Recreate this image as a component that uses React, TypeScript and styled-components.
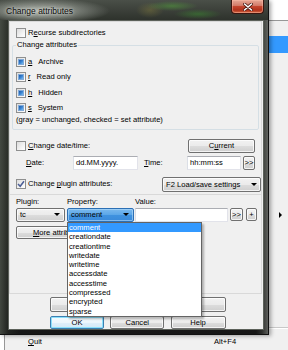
import React from "react";
import styled, { createGlobalStyle } from "styled-components";

const Global = createGlobalStyle`
  html, body { margin: 0; padding: 0; background: #ffffff; overflow: hidden; }
  body { font-family: "Liberation Sans", Arial, sans-serif; font-size: 7.6px; color: #000; }
  *, *::before, *::after { box-sizing: border-box; }
`;

const Screen = styled.div`
  position: relative;
  width: 288px;
  height: 350px;
  overflow: hidden;
  background: #ffffff;
`;

/* ---------- menu lying behind the dialog ---------- */
const Menu = styled.div`
  position: absolute;
  left: 4px;
  top: 20px;
  width: 300px;
  height: 340px;
  background: #f0f0f0;
  border: 1px solid #979797;
  display: flex;
  flex-direction: column;
  padding: 0 2px;
`;

const MenuRow = styled.div<{ $h: number; $selected?: boolean }>`
  flex: none;
  height: ${(p) => p.$h}px;
  display: grid;
  grid-template-columns: 186px 65px 10px;
  align-items: center;
  padding-left: 21px;
  background: ${(p) => (p.$selected ? "#3399ff" : "transparent")};
  color: ${(p) => (p.$selected ? "#fff" : "#000")};
`;

const MenuSpacer = styled.div<{ $h: number }>`
  flex: none;
  height: ${(p) => p.$h}px;
`;

const MenuSeparator = styled.div`
  flex: none;
  height: 2px;
  margin: 3px 0 4px 24px;
  border-top: 1px solid #c8c8c8;
  border-bottom: 1px solid #ffffff;
`;

const MenuText = styled.span``;

const SubArrow = styled.span`
  width: 0;
  height: 0;
  border-left: 3px solid #000;
  border-top: 3px solid transparent;
  border-bottom: 3px solid transparent;
`;

/* ---------- dialog window ---------- */
const Window = styled.div`
  position: absolute;
  left: 0;
  top: 0;
  width: 269px;
  height: 335px;
  display: flex;
  flex-direction: column;
  background:
    linear-gradient(to right, rgba(70, 76, 68, 0.9) 0px, rgba(40, 44, 38, 0.6) 8px, transparent 20px),
    linear-gradient(to left, rgba(110, 112, 108, 0.8) 0px, rgba(60, 62, 58, 0.6) 6px, transparent 12px),
    linear-gradient(to bottom, #3e433c 0px, #30352e 30px, #2a2d28 60%, #161616 100%);
  border-right: 1px solid #101010;
  border-bottom: 1px solid #101010;
  box-shadow: 2px 1px 4px rgba(0, 0, 0, 0.35);
`;

const TitleBar = styled.div`
  height: 20px;
  flex: none;
  display: flex;
  align-items: flex-start;
  padding-left: 6px;
  background:
    radial-gradient(ellipse 70px 13px at 40px 11px, rgba(190, 196, 188, 0.95), rgba(160, 166, 158, 0.5) 60%, rgba(150, 155, 148, 0) 100%),
    radial-gradient(ellipse 26px 5px at 172px 6px, rgba(80, 150, 60, 0.6), transparent),
    radial-gradient(ellipse 24px 5px at 198px 14px, rgba(60, 135, 50, 0.55), transparent),
    radial-gradient(ellipse 14px 8px at 150px 10px, rgba(120, 115, 60, 0.5), transparent),
    linear-gradient(to bottom, #4a4f48, #2e322c);
`;

const TitleText = styled.span`
  font-size: 8.5px;
  line-height: 20px;
  padding-top: 1px;
  color: #0c0c0c;
  text-shadow: 0 0 3px rgba(230, 232, 228, 0.95), 0 0 7px rgba(220, 222, 218, 0.7);
`;

const CloseButton = styled.div`
  margin-left: auto;
  margin-right: 4px;
  width: 33px;
  height: 14px;
  flex: none;
  border: 1px solid #3a1610;
  border-top: none;
  border-radius: 0 0 4px 4px;
  background: linear-gradient(to bottom, #e6a896 0%, #d47c6a 42%, #c4452e 50%, #b0321c 78%, #d46a44 100%);
  box-shadow: inset 0 0 0 1px rgba(255, 190, 170, 0.45);
  display: flex;
  align-items: center;
  justify-content: center;
`;

const FrameBody = styled.div`
  flex: 1;
  display: flex;
  padding: 0 4px 4px 8px;
`;

const Client = styled.div`
  flex: 1;
  position: relative;
  background: #f0f0f0;
  border: 1px solid #5c615a;
  display: flex;
  flex-direction: column;
`;

const Panel = styled.div`
  height: 273px;
  flex: none;
  margin-right: 1px;
  border: 1px solid #d9d9d9;
  display: flex;
  flex-direction: column;
`;

const CheckRow = styled.div<{ $mt: number; $h: number; $pr?: number }>`
  flex: none;
  display: flex;
  align-items: center;
  margin-top: ${(p) => p.$mt}px;
  height: ${(p) => p.$h}px;
  padding-left: 6px;
  padding-right: ${(p) => p.$pr ?? 0}px;
  white-space: nowrap;
`;

const Label = styled.span`
  margin-left: 2px;
  line-height: 10px;
`;

const Box = styled.span`
  width: 10px;
  height: 10px;
  flex: none;
  border: 1px solid #8e8f8f;
  background: linear-gradient(135deg, #dcdcdc 0%, #f6f6f6 70%, #ffffff 100%);
  display: inline-flex;
  align-items: center;
  justify-content: center;
`;

const Indeterminate = styled.span`
  width: 6px;
  height: 6px;
  border: 1px solid #7fa9d8;
  background: linear-gradient(135deg, #1d58a6 0%, #3c86d4 55%, #7cc0f2 100%);
`;

const Group = styled.fieldset`
  margin: 2px 2px 0 2px;
  padding: 7px 3px 4px 3px;
  border: 1px solid #d5dfe5;
  border-radius: 2px;
  min-width: 0;
  display: flex;
  flex-direction: column;
`;

const GroupCaption = styled.legend`
  padding: 0 1px;
  line-height: 10px;
  font-size: 7.6px;
`;

const AttrList = styled.div`
  display: flex;
  flex-direction: column;
  gap: 5.33px;
`;

const AttrRow = styled.div`
  height: 10px;
  display: flex;
  align-items: center;
  white-space: nowrap;
`;

const AccelKey = styled.u`
  margin-left: 2px;
  line-height: 10px;
`;

const AttrName = styled.span`
  margin-left: 6px;
  line-height: 10px;
`;

const Note = styled.div`
  margin-top: 2px;
  line-height: 10px;
  white-space: nowrap;
`;

const Btn = styled.button<{ $w: number; $h: number; $default?: boolean; $align?: string }>`
  font: inherit;
  color: #000;
  width: ${(p) => p.$w}px;
  height: ${(p) => p.$h}px;
  flex: none;
  padding: 0 3px;
  margin: 0;
  display: flex;
  align-items: center;
  justify-content: ${(p) => p.$align ?? "center"};
  border: 1px solid ${(p) => (p.$default ? "#3c7fb1" : "#707070")};
  border-radius: 2px;
  background: ${(p) =>
    p.$default
      ? "linear-gradient(to bottom, #f4fbff 0%, #ecf6fc 50%, #dfeffa 51%, #d3e9f7 100%)"
      : "linear-gradient(to bottom, #f2f2f2 0%, #ebebeb 50%, #dddddd 51%, #cfcfcf 100%)"};
  box-shadow: inset 0 0 0 1px ${(p) => (p.$default ? "#8ce0fb" : "rgba(255,255,255,0.75)")};
  white-space: nowrap;
  overflow: hidden;
`;

const DateRow = styled.div`
  flex: none;
  margin-top: 3px;
  height: 14px;
  padding-left: 16px;
  display: flex;
  align-items: center;
  white-space: nowrap;
`;

const FieldLabel = styled.span<{ $w: number; $ml?: number }>`
  width: ${(p) => p.$w}px;
  margin-left: ${(p) => p.$ml ?? 0}px;
  flex: none;
`;

const TextBox = styled.div<{ $w: number; $h?: number; $ml?: number }>`
  width: ${(p) => p.$w}px;
  height: ${(p) => p.$h ?? 14}px;
  margin-left: ${(p) => p.$ml ?? 0}px;
  flex: none;
  background: #fff;
  border: 1px solid #e2e3ea;
  border-top-color: #abadb3;
  border-left-color: #dbdfe6;
  display: flex;
  align-items: center;
  padding-left: 2px;
  white-space: nowrap;
`;

const PluginSection = styled.div`
  flex: 1;
  margin-top: 2px;
  border-top: 1px solid #d9d9d9;
  padding: 2px 0 0 6px;
  display: flex;
  flex-direction: column;
`;

const ColumnLabels = styled.div`
  display: flex;
  line-height: 10px;
  height: 10px;
`;

const ComboRow = styled.div`
  margin-top: 1px;
  height: 14px;
  display: flex;
  align-items: center;
`;

const Combo = styled.div<{ $w: number; $ml?: number; $open?: boolean }>`
  width: ${(p) => p.$w}px;
  height: 14px;
  margin-left: ${(p) => p.$ml ?? 0}px;
  flex: none;
  display: flex;
  align-items: center;
  justify-content: space-between;
  padding: 0 4px 0 3px;
  border: 1px solid ${(p) => (p.$open ? "#2c6fb4" : "#707070")};
  border-radius: 2px;
  background: ${(p) =>
    p.$open
      ? "linear-gradient(to bottom, #7ab9ee 0%, #5aa6e8 50%, #3f92df 51%, #3a8adb 100%)"
      : "linear-gradient(to bottom, #f2f2f2 0%, #ebebeb 50%, #dddddd 51%, #cfcfcf 100%)"};
  box-shadow: inset 0 0 0 1px ${(p) => (p.$open ? "rgba(180,220,250,0.6)" : "rgba(255,255,255,0.75)")};
`;

const DropArrow = styled.span`
  width: 0;
  height: 0;
  flex: none;
  border-top: 3px solid #000;
  border-left: 3px solid transparent;
  border-right: 3px solid transparent;
`;

const SmallBtnRow = styled.div`
  display: flex;
  margin-left: 2px;
  gap: 3px;
`;

const WideRow = styled.div<{ $mt: number }>`
  flex: none;
  margin-top: ${(p) => p.$mt}px;
  margin-left: 41px;
  display: flex;
  gap: 6.25px;
`;

const DropList = styled.div`
  position: absolute;
  left: 58px;
  top: 201px;
  width: 135px;
  height: 95px;
  background: #fff;
  border: 1px solid #646464;
  box-shadow: 2px 2px 2px rgba(0, 0, 0, 0.28);
  display: flex;
  flex-direction: column;
  z-index: 2;
`;

const DropItem = styled.div<{ $selected?: boolean }>`
  height: 9.3px;
  line-height: 9.3px;
  padding-left: 1px;
  background: ${(p) => (p.$selected ? "#3399ff" : "transparent")};
  color: ${(p) => (p.$selected ? "#fff" : "#000")};
  white-space: nowrap;
`;

const properties = [
  "comment",
  "creationdate",
  "creationtime",
  "writedate",
  "writetime",
  "accessdate",
  "accesstime",
  "compressed",
  "encrypted",
  "sparse",
];

const attributes: [string, string][] = [
  ["a", "Archive"],
  ["r", "Read only"],
  ["h", "Hidden"],
  ["s", "System"],
];

export default function App() {
  return (
    <>
      <Global />
      <Screen>
        <Menu>
          <MenuRow $h={15} />
          <MenuRow $h={17} $selected />
          <MenuSpacer $h={154} />
          <MenuRow $h={16}>
            <MenuText />
            <MenuText />
            <SubArrow />
          </MenuRow>
          <MenuSpacer $h={101} />
          <MenuSeparator />
          <MenuRow $h={17}>
            <MenuText>
              <u>Q</u>uit
            </MenuText>
            <MenuText>Alt+F4</MenuText>
          </MenuRow>
        </Menu>

        <Window>
          <TitleBar>
            <TitleText>Change attributes</TitleText>
            <CloseButton>
              <svg width="10" height="8" viewBox="0 0 10 8">
                <path d="M1.5 1 L8.5 7 M8.5 1 L1.5 7" stroke="#4a1a12" strokeWidth="3" strokeLinecap="round" />
                <path d="M1.5 1 L8.5 7 M8.5 1 L1.5 7" stroke="#ffffff" strokeWidth="1.6" strokeLinecap="round" />
              </svg>
            </CloseButton>
          </TitleBar>

          <FrameBody>
            <Client>
              <Panel>
                <CheckRow $mt={6} $h={10}>
                  <Box />
                  <Label>
                    R<u>e</u>curse subdirectories
                  </Label>
                </CheckRow>

                <Group>
                  <GroupCaption>Change attributes</GroupCaption>
                  <AttrList>
                    {attributes.map(([k, name]) => (
                      <AttrRow key={k}>
                        <Box>
                          <Indeterminate />
                        </Box>
                        <AccelKey>{k}</AccelKey>
                        <AttrName>{name}</AttrName>
                      </AttrRow>
                    ))}
                  </AttrList>
                  <Note>(gray = unchanged, checked = set attribute)</Note>
                </Group>

                <CheckRow $mt={9} $h={14} $pr={6}>
                  <Box />
                  <Label>
                    <u>C</u>hange date/time:
                  </Label>
                  <Btn $w={67} $h={14} style={{ marginLeft: "auto" }}>
                    C<u>u</u>rrent
                  </Btn>
                </CheckRow>

                <DateRow>
                  <FieldLabel $w={47}>
                    <u>D</u>ate:
                  </FieldLabel>
                  <TextBox $w={65}>dd.MM.yyyy.</TextBox>
                  <FieldLabel $w={43} $ml={6}>
                    <u>T</u>ime:
                  </FieldLabel>
                  <TextBox $w={54}>hh:mm:ss</TextBox>
                  <Btn $w={12} $h={14} style={{ marginLeft: 2, padding: 0 }}>
                    &gt;&gt;
                  </Btn>
                </DateRow>

                <CheckRow $mt={7} $h={15}>
                  <Box>
                    <svg width="8" height="8" viewBox="0 0 8 8">
                      <path d="M1 4 L3.2 6.3 L7 1.2" fill="none" stroke="#4b5e96" strokeWidth="1.5" />
                    </svg>
                  </Box>
                  <Label>
                    Change <u>p</u>lugin attributes:
                  </Label>
                  <Btn $w={99} $h={15} $align="space-between" style={{ marginLeft: "auto" }}>
                    <span>F2 Load/save settings</span>
                    <DropArrow />
                  </Btn>
                </CheckRow>

                <PluginSection>
                  <ColumnLabels>
                    <FieldLabel $w={51}>Plugin:</FieldLabel>
                    <FieldLabel $w={68}>Property:</FieldLabel>
                    <FieldLabel $w={60}>Value:</FieldLabel>
                  </ColumnLabels>
                  <ComboRow>
                    <Combo $w={49}>
                      <span>tc</span>
                      <DropArrow />
                    </Combo>
                    <Combo $w={67} $ml={2} $open>
                      <span>comment</span>
                      <DropArrow />
                    </Combo>
                    <TextBox $w={93} $ml={1} />
                    <SmallBtnRow>
                      <Btn $w={13} $h={13} style={{ padding: 0 }}>
                        &gt;&gt;
                      </Btn>
                      <Btn $w={11} $h={13} style={{ padding: 0 }}>
                        +
                      </Btn>
                    </SmallBtnRow>
                  </ComboRow>
                  <Btn $w={80} $h={13} $align="flex-start" style={{ marginTop: 4, paddingLeft: 16 }}>
                    <u>M</u>ore attributes...
                  </Btn>
                </PluginSection>
              </Panel>

              <WideRow $mt={3}>
                <Btn $w={176} $h={15} />
              </WideRow>
              <WideRow $mt={4}>
                <Btn $w={54} $h={13} $default>
                  OK
                </Btn>
                <Btn $w={54} $h={13}>
                  Cancel
                </Btn>
                <Btn $w={55} $h={13}>
                  Help
                </Btn>
              </WideRow>

              <DropList>
                {properties.map((p, i) => (
                  <DropItem key={p} $selected={i === 0}>
                    {p}
                  </DropItem>
                ))}
              </DropList>
            </Client>
          </FrameBody>
        </Window>
      </Screen>
    </>
  );
}
